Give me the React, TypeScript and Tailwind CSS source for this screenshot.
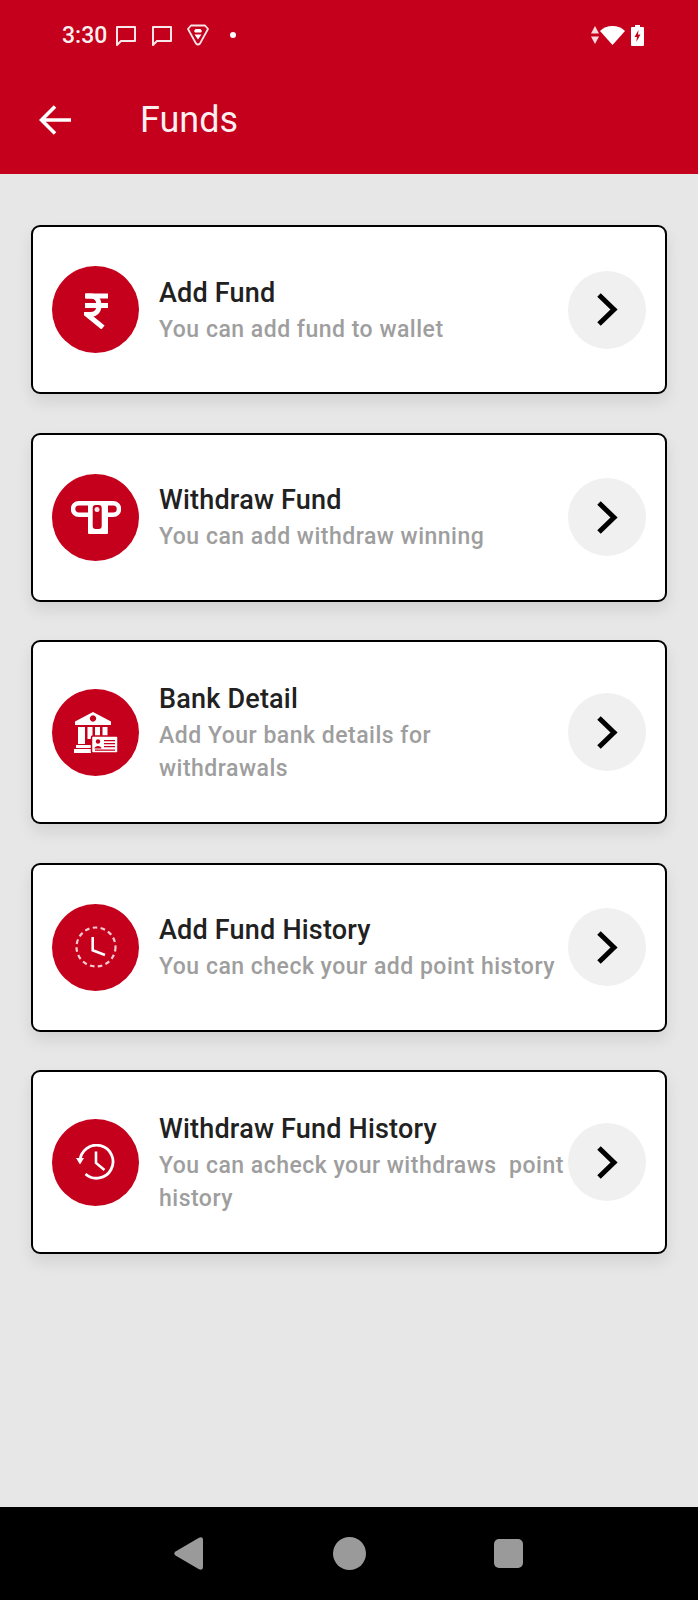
import React from 'react'

const RED = '#c4001c'

function ChatIcon({ className }: { className: string }) {
  return (
    <svg viewBox="0 0 22 22" className={className} fill="none" stroke="#fff" strokeOpacity="0.9" strokeWidth="2">
      <path d="M2 2h18v14H6l-4 4z" strokeLinejoin="round" />
    </svg>
  )
}

function BraveIcon() {
  return (
    <svg viewBox="0 0 22 22" className="w-[22px] h-[22px] ml-[14px]" fill="none">
      <path d="M4 1.500h14l3 3.500-8 14.500q-2 2-4 0L1 5z" stroke="#fff" strokeOpacity="0.9" strokeWidth="1.800" strokeLinejoin="round" />
      <path d="M7 7l1.500-2h5L15 7l-1 1.500H8z" fill="#fff" />
      <path d="M7.500 10.500h7L11 15.500z" fill="#fff" />
    </svg>
  )
}

function StatusRight() {
  return (
    <div className="flex items-center">
      <svg viewBox="0 0 8 18" className="w-[8px] h-[18px]" fill="#fff" fillOpacity="0.85">
        <path d="M4 0l4 7.500H0zM0 10.500h8L4 18z" />
      </svg>
      <svg viewBox="0 0 25 19" className="w-[25px] h-[19px] ml-[1px]" fill="#fff">
        <path d="M12.500 0C7.500 0 3.500 1.800 0 5l12.500 14L25 5C21.500 1.800 17.500 0 12.500 0z" />
      </svg>
      <svg viewBox="0 0 13 21" className="w-[13px] h-[21px] ml-[6px]">
        <path d="M4 0h5v2h3q1 0 1 1v17q0 1-1 1H1q-1 0-1-1V3q0-1 1-1h3z" fill="#fff" />
        <path d="M7.500 5L3.500 12h2.500l-.7 5 4.200-7.500H7z" fill={RED} />
      </svg>
    </div>
  )
}

function RupeeIcon() {
  return (
    <svg viewBox="0 0 24 36" className="w-[24px] h-[36px] mt-[3px]" fill="none" stroke="#fff" strokeWidth="5">
      <path d="M1 3h23M1 12.500h23" />
      <path d="M2 3h5c5 0 8 3.500 8 9.500s-4 9-8 9H3l16 13" />
    </svg>
  )
}

function AtmIcon() {
  return (
    <svg viewBox="0 0 50 33" className="w-[50px] h-[33px]" fill="none">
      <path d="M18 13.750H7.750a5.750 5.750 0 0 1 0-11.500h34.500a5.750 5.750 0 0 1 0 11.500H36" stroke="#fff" strokeWidth="4.500" />
      <rect x="17" y="0" width="20" height="33" rx="1" fill="#fff" />
      <rect x="21.700" y="4" width="9" height="24" rx="3" fill={RED} />
      <circle cx="26" cy="8.500" r="2.500" fill="#fff" fillOpacity="0.9" />
    </svg>
  )
}

function BankIcon() {
  return (
    <svg viewBox="0 0 44 41" className="w-[44px] h-[41px]" fill="#fff">
      <path d="M19 0L1 9.500v3.500h36V9.500zM19 3.300a3.200 3.200 0 1 0 .01 0z" fillRule="evenodd" />
      <path d="M4 15h7v17H4zM13.500 15h5v12h-5zM21 15h5v10h-5zM28.500 15h5v9h-5z" />
      <path d="M2 33h17v3H2zM0 37h19v4H0z" />
      <rect x="17.500" y="24" width="26.500" height="17" rx="1.500" stroke={RED} strokeWidth="1.500" />
      <circle cx="24" cy="29.500" r="2.200" fill={RED} />
      <path d="M20.500 36.500c0-3.500 7-3.500 7 0z" fill={RED} />
      <path d="M30 28h11v1.300H30zM30 31h11v1.300H30zM30 34h11v1.300H30zM21 37.500h20v1.200H21z" fill={RED} />
    </svg>
  )
}

function DashedClockIcon() {
  return (
    <svg viewBox="0 0 42 42" className="w-[42px] h-[42px]" fill="none" stroke="#fff">
      <circle cx="21" cy="21" r="19.500" strokeWidth="2.200" strokeDasharray="4.600 3.400" strokeOpacity="0.8" />
      <path d="M17.700 11v13.300L30 29" strokeWidth="2.600" />
    </svg>
  )
}

function HistoryIcon() {
  return (
    <svg viewBox="0 0 39 36" className="w-[39px] h-[36px]" fill="none" stroke="#fff" strokeWidth="2.800">
      <path d="M4 17.500a16.500 16.500 0 1 1 5.500 12.500" />
      <path d="M0 14h8l-4 6.500z" fill="#fff" stroke="none" />
      <path d="M20 7.500v11.500l8.500 7" strokeWidth="2.600" />
    </svg>
  )
}

const items = [
  { title: 'Add Fund', sub: 'You can add fund to wallet', icon: <RupeeIcon /> },
  { title: 'Withdraw Fund', sub: 'You can add withdraw winning', icon: <AtmIcon /> },
  { title: 'Bank Detail', sub: 'Add Your bank details for\nwithdrawals', icon: <BankIcon /> },
  { title: 'Add Fund History', sub: 'You can check your add point history', icon: <DashedClockIcon /> },
  { title: 'Withdraw Fund History', sub: 'You can acheck your withdraws  point history', icon: <HistoryIcon /> },
]

export default function App() {
  return (
    <div className="h-[1600px] flex flex-col bg-[#e7e7e7] font-['Roboto',sans-serif]">
      <header className="h-[174px] shrink-0 bg-[#c4001c] text-white">
        <div className="h-[70px] pl-[62px] pr-[54px] flex items-center justify-between">
          <div className="flex items-center">
            <span className="text-[23px] font-medium leading-none text-white/95">3:30</span>
            <ChatIcon className="w-[22px] h-[22px] ml-[8px] mt-[1px]" />
            <ChatIcon className="w-[22px] h-[22px] ml-[14px] mt-[1px]" />
            <BraveIcon />
            <span className="w-[6px] h-[6px] rounded-full bg-white ml-[21px]" />
          </div>
          <StatusRight />
        </div>
        <div className="h-[100px] pl-[39px] flex items-center">
          <svg viewBox="0 0 32 30" className="w-[32px] h-[30px]" fill="none" stroke="#fff" strokeWidth="3.600">
            <path d="M32 15H3M16 1.500L2.500 15 16 28.500" />
          </svg>
          <h1 className="ml-[69px] text-[36px] leading-none text-white/95">Funds</h1>
        </div>
      </header>

      <main className="flex-1 px-[31px] pt-[51px] flex flex-col gap-[38.6px]">
        {items.map((item) => (
          <div
            key={item.title}
            className="min-h-[169px] border-2 border-black rounded-[9px] bg-white flex items-center pl-[19px] pr-[19px] shadow-[0_8px_16px_rgba(0,0,0,0.09)]"
          >
            <div className="w-[87px] h-[87px] rounded-full bg-[#c4001c] shrink-0 flex items-center justify-center">
              {item.icon}
            </div>
            <div className="flex-1 min-w-0 ml-[20px] py-[37.5px]">
              <div className="text-[27px] font-medium leading-[39px] tracking-[0.2px] text-[#212121]">{item.title}</div>
              <div className="text-[23px] leading-[33px] tracking-[0.5px] font-medium text-[#9e9e9e] whitespace-pre-wrap">{item.sub}</div>
            </div>
            <div className="w-[78px] h-[78px] rounded-full bg-[#f0f0f0] shrink-0 flex items-center justify-center pl-[1px]">
              <svg viewBox="0 0 21 33" className="w-[21px] h-[33px]" fill="none" stroke="#000" strokeWidth="5">
                <path d="M2 2l15 14.500L2 31" />
              </svg>
            </div>
          </div>
        ))}
      </main>

      <nav className="h-[93px] shrink-0 bg-black flex items-center justify-center">
        <svg viewBox="0 0 29 33" className="w-[29px] h-[33px] -ml-[2px]" fill="#9a9a9a">
          <path d="M25 .7q4-1.500 4 2.300v27q0 3.800-4 2.300L1.500 18.500q-2.500-2 0-4z" />
        </svg>
        <span className="w-[33px] h-[33px] rounded-full bg-[#9a9a9a] ml-[130px]" />
        <span className="w-[29px] h-[29px] rounded-[5px] bg-[#9a9a9a] ml-[128px]" />
      </nav>
    </div>
  )
}
